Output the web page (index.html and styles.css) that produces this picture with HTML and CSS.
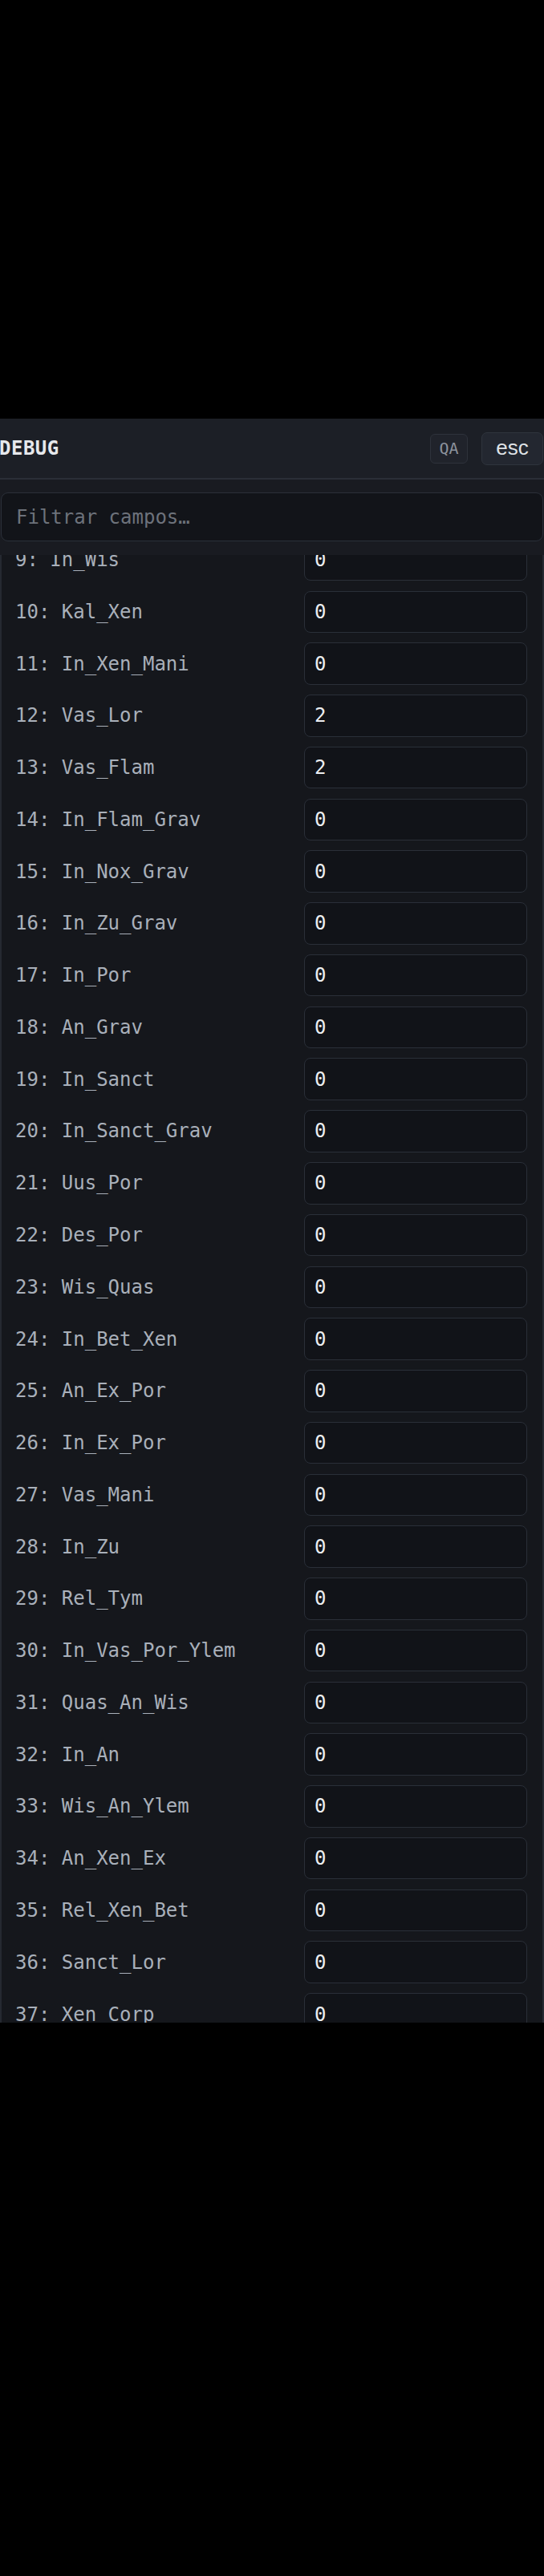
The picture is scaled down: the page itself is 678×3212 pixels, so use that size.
FILE: index.html
```html
<!DOCTYPE html>
<html lang="es">
<head>
    <meta charset="UTF-8">
    <meta name="viewport" content="width=device-width, initial-scale=1.0">
    <title>Debug</title>
    <link rel="stylesheet" href="styles.css">
</head>
<body>
    <div class="panel">
        <div class="head">
            <span class="title">DEBUG</span>
            <div class="head-actions">
                <span class="badge">QA</span>
                <button class="esc">esc</button>
            </div>
        </div>
        <div class="search-wrap">
            <input class="search" type="text" placeholder="Filtrar campos…">
        </div>
        <div class="list">
            <div class="rows">
                <div class="row"><label>9: In_Wis</label><input type="text" value="0"></div>
                <div class="row"><label>10: Kal_Xen</label><input type="text" value="0"></div>
                <div class="row"><label>11: In_Xen_Mani</label><input type="text" value="0"></div>
                <div class="row"><label>12: Vas_Lor</label><input type="text" value="2"></div>
                <div class="row"><label>13: Vas_Flam</label><input type="text" value="2"></div>
                <div class="row"><label>14: In_Flam_Grav</label><input type="text" value="0"></div>
                <div class="row"><label>15: In_Nox_Grav</label><input type="text" value="0"></div>
                <div class="row"><label>16: In_Zu_Grav</label><input type="text" value="0"></div>
                <div class="row"><label>17: In_Por</label><input type="text" value="0"></div>
                <div class="row"><label>18: An_Grav</label><input type="text" value="0"></div>
                <div class="row"><label>19: In_Sanct</label><input type="text" value="0"></div>
                <div class="row"><label>20: In_Sanct_Grav</label><input type="text" value="0"></div>
                <div class="row"><label>21: Uus_Por</label><input type="text" value="0"></div>
                <div class="row"><label>22: Des_Por</label><input type="text" value="0"></div>
                <div class="row"><label>23: Wis_Quas</label><input type="text" value="0"></div>
                <div class="row"><label>24: In_Bet_Xen</label><input type="text" value="0"></div>
                <div class="row"><label>25: An_Ex_Por</label><input type="text" value="0"></div>
                <div class="row"><label>26: In_Ex_Por</label><input type="text" value="0"></div>
                <div class="row"><label>27: Vas_Mani</label><input type="text" value="0"></div>
                <div class="row"><label>28: In_Zu</label><input type="text" value="0"></div>
                <div class="row"><label>29: Rel_Tym</label><input type="text" value="0"></div>
                <div class="row"><label>30: In_Vas_Por_Ylem</label><input type="text" value="0"></div>
                <div class="row"><label>31: Quas_An_Wis</label><input type="text" value="0"></div>
                <div class="row"><label>32: In_An</label><input type="text" value="0"></div>
                <div class="row"><label>33: Wis_An_Ylem</label><input type="text" value="0"></div>
                <div class="row"><label>34: An_Xen_Ex</label><input type="text" value="0"></div>
                <div class="row"><label>35: Rel_Xen_Bet</label><input type="text" value="0"></div>
                <div class="row"><label>36: Sanct_Lor</label><input type="text" value="0"></div>
                <div class="row"><label>37: Xen_Corp</label><input type="text" value="0"></div>
            </div>
        </div>
    </div>
</body>
</html>
```

FILE: styles.css
```css
body {
    margin: 0;
    background: #000000;
    font-family: "DejaVu Sans Mono", monospace;
}
.panel {
    margin-top: 522px;
    width: 678px;
    height: 2000px;
    background: #16181d;
    display: flex;
    flex-direction: column;
}
.head {
    height: 74px;
    flex: none;
    display: flex;
    align-items: center;
    justify-content: space-between;
    padding: 0 1px 0 0;
    background: #1c1f26;
    border-bottom: 2px solid #2a2e37;
}
.title {
    font-weight: bold;
    font-size: 24px;
    letter-spacing: 0.5px;
    color: #e6e8ec;
    margin-left: -1px;
}
.head-actions {
    display: flex;
    align-items: center;
    gap: 17px;
}
.badge {
    width: 47px;
    height: 37px;
    box-sizing: border-box;
    display: flex;
    align-items: center;
    justify-content: center;
    font-size: 20px;
    color: #8c929c;
    background: #20232b;
    border: 1px solid #2e323b;
    border-radius: 6px;
}
.esc {
    width: 77px;
    height: 41px;
    box-sizing: border-box;
    font-family: "Liberation Sans", Arial, sans-serif;
    font-size: 26px;
    color: #dfe2e6;
    background: #232730;
    border: 1px solid #2f343d;
    border-radius: 7px;
    padding: 0 0 2px;
}
.search-wrap {
    flex: none;
    padding: 16px 1px 16.7px;
    background: #191b21;
}
.search {
    display: block;
    width: 100%;
    height: 61px;
    box-sizing: border-box;
    padding: 0 18px;
    font-family: "DejaVu Sans Mono", monospace;
    font-size: 24px;
    color: #e6e8eb;
    background: #121419;
    border: 1px solid #2b3039;
    border-radius: 9px;
    outline: none;
}
.search::placeholder {
    color: #6d727b;
}
.list {
    flex: 1;
    overflow: hidden;
    background: #15171c;
    border-left: 2px solid #252931;
    border-right: 2px solid #252931;
}
.rows {
    margin-top: -26px;
}
.row {
    height: 64.77px;
    display: grid;
    grid-template-columns: 1fr 277.7px;
    align-items: center;
    padding: 0 19.3px 0 17px;
}
.row label {
    font-size: 24px;
    color: #a9b0ba;
    white-space: nowrap;
}
.row input {
    height: 52.5px;
    box-sizing: border-box;
    width: 100%;
    padding: 0 12px;
    font-family: "DejaVu Sans Mono", monospace;
    font-size: 24px;
    color: #eceef1;
    background: #111318;
    border: 1px solid #2a2f38;
    border-radius: 8px;
    outline: none;
}
```
